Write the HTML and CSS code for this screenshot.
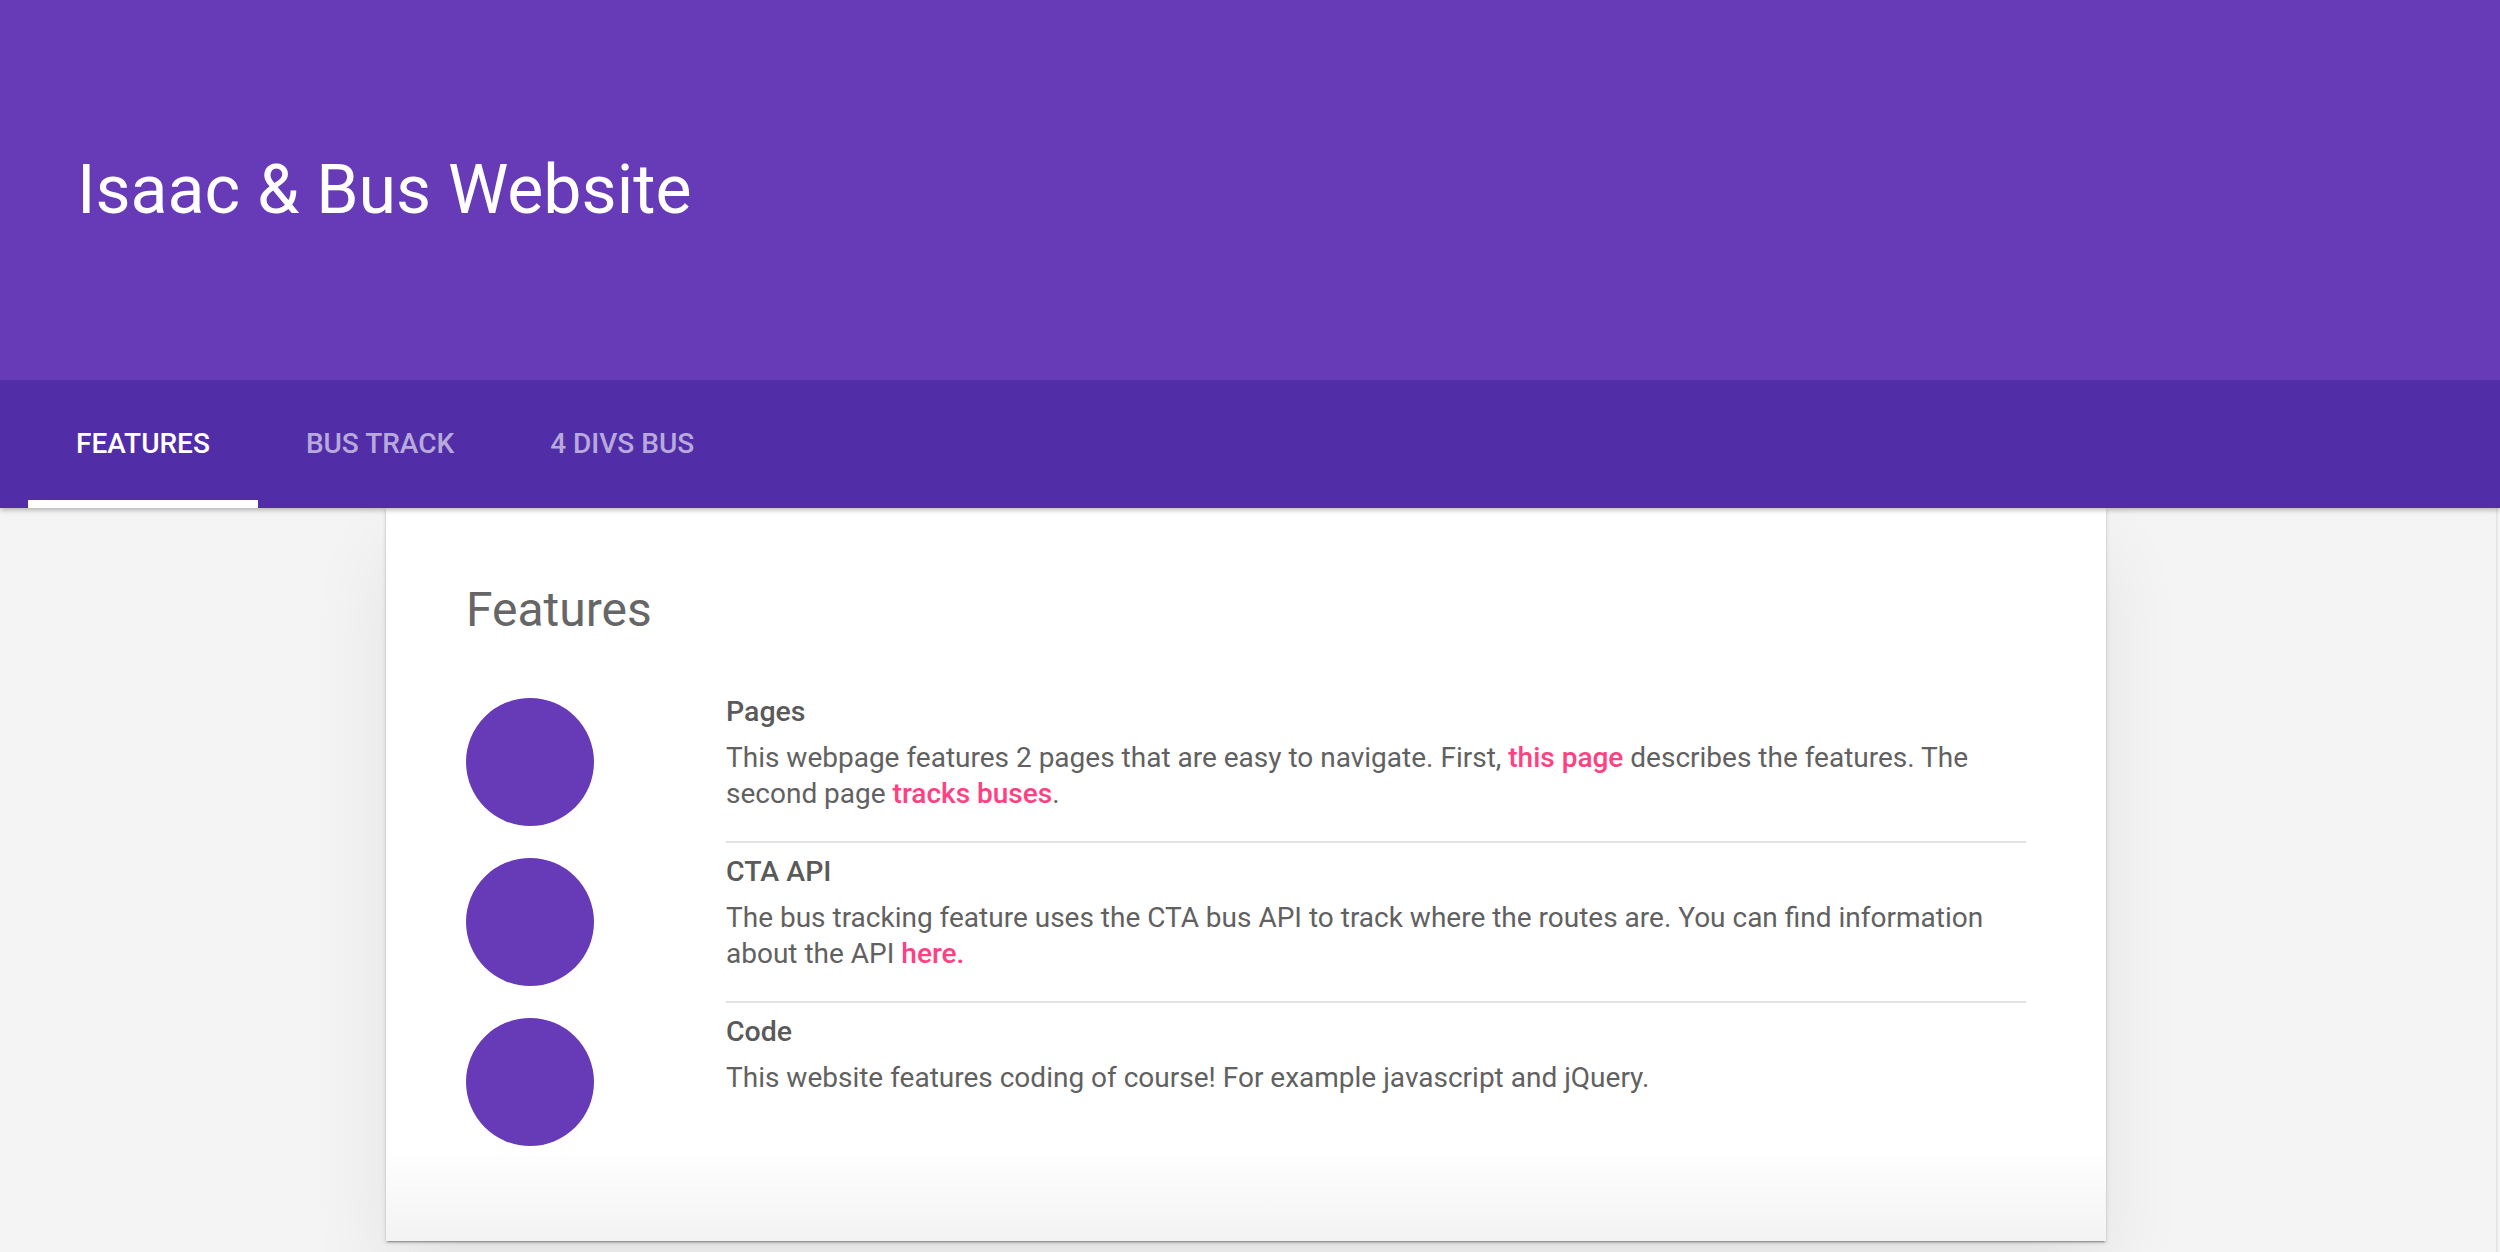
FILE: index.html
```html
<!DOCTYPE html>
<html lang="en">
<head>
<meta charset="utf-8">
<title>Isaac &amp; Bus Website</title>
<link rel="stylesheet" href="styles.css">
</head>
<body>
<header class="site-header">
  <div class="header-row">
    <h1 class="site-title">Isaac &amp; Bus Website</h1>
  </div>
  <nav class="tab-bar">
    <a class="tab is-active" href="#">FEATURES</a>
    <a class="tab" href="#">BUS TRACK</a>
    <a class="tab" href="#">4 DIVS BUS</a>
  </nav>
</header>
<main class="content">
  <section class="card">
    <h2 class="card-title">Features</h2>
    <ul class="feature-list">
      <li class="feature">
        <span class="feature-dot"></span>
        <div class="feature-body has-divider">
          <h3 class="feature-title">Pages</h3>
          <p class="feature-text">This webpage features 2 pages that are easy to navigate. First, <a class="link" href="#">this page</a> describes the features. The second page <a class="link" href="#">tracks buses</a>.</p>
        </div>
      </li>
      <li class="feature">
        <span class="feature-dot"></span>
        <div class="feature-body has-divider">
          <h3 class="feature-title">CTA API</h3>
          <p class="feature-text">The bus tracking feature uses the CTA bus API to track where the routes are. You can find information about the API <a class="link" href="#">here.</a></p>
        </div>
      </li>
      <li class="feature">
        <span class="feature-dot"></span>
        <div class="feature-body">
          <h3 class="feature-title">Code</h3>
          <p class="feature-text">This website features coding of course! For example javascript and jQuery.</p>
        </div>
      </li>
    </ul>
  </section>
</main>
</body>
</html>
```

FILE: styles.css
```css
html, body {
  margin: 0;
  padding: 0;
}

body {
  font-family: Roboto, "Liberation Sans", Arial, sans-serif;
  background: #f4f4f4;
  height: 1252px;
  overflow: hidden;
}

.site-header {
  position: relative;
  z-index: 2;
  box-shadow: 0 2px 5px rgba(0, 0, 0, 0.28);
}

.header-row {
  background: #673ab7;
  height: 380px;
  box-sizing: border-box;
  padding: 156px 0 0 77px;
}

.site-title {
  margin: 0;
  color: #fff;
  font-weight: 400;
  font-size: 68px;
  line-height: 68px;
}

.tab-bar {
  background: #512da8;
  height: 128px;
  display: flex;
  padding-left: 28px;
}

.tab {
  position: relative;
  padding: 0 48px;
  line-height: 128px;
  font-size: 28px;
  font-weight: 500;
  color: rgba(255, 255, 255, 0.6);
  text-decoration: none;
}

.tab.is-active {
  color: #fff;
}

.tab.is-active::after {
  content: "";
  position: absolute;
  left: 0;
  right: 0;
  bottom: 0;
  height: 8px;
  background: #fff;
}

.content {
  height: 744px;
  margin-right: 2px;
  border-right: 2px solid #e6e6e6;
}

.card {
  width: 1720px;
  box-sizing: border-box;
  margin-left: 386px;
  padding: 74px 80px 95px;
  background: linear-gradient(to bottom, #ffffff calc(100% - 95px), #f3f3f3 100%);
  box-shadow: 0 2px 2px 0 rgba(0, 0, 0, 0.14), 0 3px 1px -2px rgba(0, 0, 0, 0.2), 0 1px 5px 0 rgba(0, 0, 0, 0.12), 0 40px 80px rgba(0, 0, 0, 0.07);
}

.card-title {
  margin: 0 0 60px;
  font-size: 48px;
  line-height: 56px;
  font-weight: 400;
  color: #666;
}

.feature-list {
  list-style: none;
  margin: 0;
  padding: 0;
}

.feature {
  display: flex;
  gap: 132px;
  margin-bottom: 15px;
}

.feature:last-child {
  margin-bottom: 0;
}

.feature-dot {
  flex: none;
  width: 128px;
  height: 128px;
  border-radius: 50%;
  background: #673ab7;
}

.feature-body {
  flex: 1;
}

.feature-body.has-divider {
  padding-bottom: 29px;
  border-bottom: 2px solid #e2e2e2;
}

.feature-title {
  margin: 0;
  font-size: 28.5px;
  line-height: 28px;
  font-weight: 500;
  color: #5a5a5a;
}

.feature-text {
  margin: 14px 0 0;
  font-size: 28px;
  line-height: 36px;
  color: #616161;
}

.link {
  color: #ff4081;
  font-weight: 500;
  text-decoration: none;
}
```
